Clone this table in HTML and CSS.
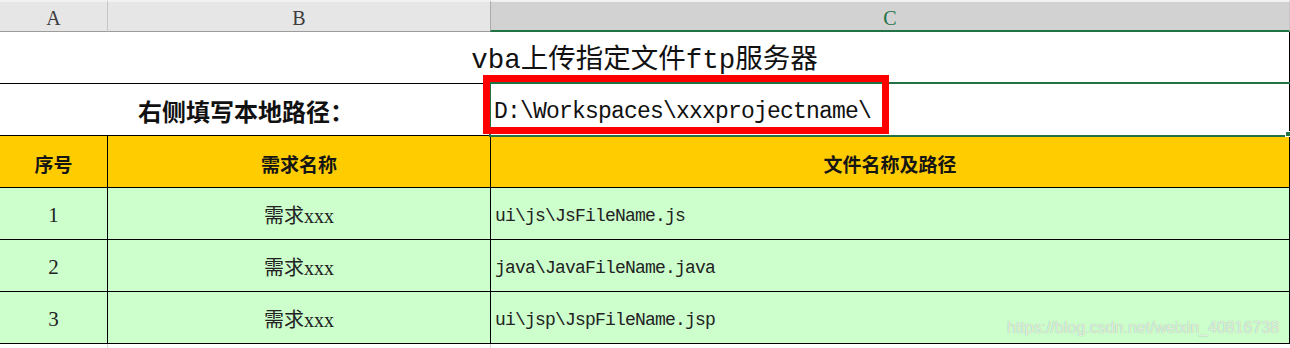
FILE: index.html
```html
<!DOCTYPE html>
<html lang="zh-CN">
<head>
<meta charset="utf-8">
<title>vba上传指定文件ftp服务器</title>
<link rel="stylesheet" href="styles.css">
</head>
<body>
<div class="sheet">
  <div class="colheads">
    <div class="ch">A</div>
    <div class="ch ch-b">B</div>
    <div class="ch ch-c">C</div>
  </div>

  <div class="row row-title">
    <div class="title">vba上传指定文件ftp服务器</div>
  </div>

  <div class="row row-path">
    <div class="label">右侧填写本地路径：</div>
    <div class="path">D:\Workspaces\xxxprojectname\</div>
  </div>

  <div class="row row-head">
    <div class="cell hd">序号</div>
    <div class="cell hd col-b">需求名称</div>
    <div class="cell hd col-c">文件名称及路径</div>
  </div>

  <div class="row row-data">
    <div class="cell num">1</div>
    <div class="cell name col-b">需求xxx</div>
    <div class="cell file col-c">ui\js\JsFileName.js</div>
  </div>
  <div class="row row-data">
    <div class="cell num">2</div>
    <div class="cell name col-b">需求xxx</div>
    <div class="cell file col-c">java\JavaFileName.java</div>
  </div>
  <div class="row row-data">
    <div class="cell num">3</div>
    <div class="cell name col-b">需求xxx</div>
    <div class="cell file col-c">ui\jsp\JspFileName.jsp</div>
  </div>

  <div class="tail">
    <div></div>
    <div class="tl"></div>
    <div class="tl"></div>
  </div>

  <div class="selection"></div>
  <div class="handle"></div>
  <div class="redbox"></div>
  <div class="watermark">https://blog.csdn.net/weixin_40816738</div>
</div>
</body>
</html>
```

FILE: styles.css
```css
* { box-sizing: border-box; }
html, body { margin: 0; padding: 0; background: #ffffff; }
body { width: 1290px; height: 348px; overflow: hidden; }

.sheet {
  position: relative;
  width: 1290px;
  height: 348px;
  font-family: "Liberation Serif", "Noto Sans CJK SC", serif;
  color: #1e1e1e;
}

/* column headers */
.colheads {
  display: grid;
  grid-template-columns: 107px 383px 800px;
  height: 32px;
}
.ch {
  display: flex;
  justify-content: center;
  align-items: flex-end;
  padding-bottom: 3px;
  background: #e6e6e6;
  border-top: 2px solid #f1f1f1;
  border-bottom: 1px solid #9c9c9c;
  font-family: "Liberation Serif", serif;
  font-size: 20px;
  line-height: 20px;
  color: #3c3c3c;
}
.ch-b { border-left: 1px solid #c6c6c6; }
.ch-c {
  background: #d2d2d2;
  border-left: 1px solid #ababab;
  border-right: 1px solid #c6c6c6;
  border-bottom: 2px solid #217346;
  padding-bottom: 2px;
  color: #217346;
}

/* rows */
.row {
  display: grid;
  grid-template-columns: 107px 383px 800px;
  height: 52px;
  border-bottom: 1px solid #000;
}

.row-title .title {
  grid-column: 1 / -1;
  display: flex;
  justify-content: center;
  align-items: center;
  padding-top: 7px;
  border-right: 1px solid #000;
  font-family: "Liberation Mono", "Noto Sans CJK SC", monospace;
  font-size: 27.5px;
  line-height: 1;
  color: #111;
}

.row-path .label {
  grid-column: 1 / 3;
  display: flex;
  justify-content: center;
  align-items: center;
  padding-top: 2px;
  padding-left: 2px;
  font-family: "Noto Sans CJK SC", sans-serif;
  font-weight: 700;
  font-size: 24px;
  line-height: 1;
  color: #111;
}
.row-path .path {
  grid-column: 3;
  display: flex;
  align-items: center;
  padding-left: 3px;
  padding-top: 5px;
  border-left: 1px solid #000;
  border-right: 1px solid #000;
  font-family: "Liberation Mono", monospace;
  font-size: 23px;
  letter-spacing: -0.8px;
  line-height: 1;
  color: #111;
}

.cell {
  display: flex;
  align-items: center;
  justify-content: center;
  padding-top: 4px;
  line-height: 1;
}
.col-b { border-left: 1px solid #000; }
.col-c { border-left: 1px solid #000; border-right: 1px solid #000; }

.row-head { background: #ffcc00; }
.row-head .hd {
  font-family: "Noto Sans CJK SC", sans-serif;
  font-weight: 700;
  font-size: 19px;
  color: #151515;
}

.row-data { background: #ccffcc; }
.row-data .num {
  font-family: "Liberation Serif", serif;
  font-size: 21px;
  color: #222;
}
.row-data .name {
  font-family: "Liberation Serif", "Noto Sans CJK SC", serif;
  font-size: 20px;
  color: #222;
}
.row-data .file {
  justify-content: flex-start;
  padding-left: 4px;
  font-family: "Liberation Mono", monospace;
  font-size: 18px;
  letter-spacing: -0.8px;
  color: #222;
}

.tail {
  display: grid;
  grid-template-columns: 107px 383px 800px;
  height: 5px;
}
.tail .tl { border-left: 1px solid #d4d4d4; }

/* overlays */
.selection {
  position: absolute;
  left: 489px;
  top: 82px;
  width: 803px;
  height: 55px;
  border: 2px solid #217346;
}
.handle {
  position: absolute;
  left: 1285px;
  top: 131px;
  width: 6px;
  height: 6px;
  background: #217346;
  border: 1px solid #ffffff;
}
.redbox {
  position: absolute;
  left: 483px;
  top: 75px;
  width: 406px;
  height: 59px;
  border: 7px solid #ff0000;
}
.watermark {
  position: absolute;
  left: 1007px;
  top: 320px;
  font-family: "Liberation Sans", sans-serif;
  font-size: 16px;
  line-height: 1;
  color: rgba(255, 255, 255, 0.75);
  text-shadow: 0 0 1px rgba(0, 0, 0, 0.35);
  white-space: nowrap;
}
```
